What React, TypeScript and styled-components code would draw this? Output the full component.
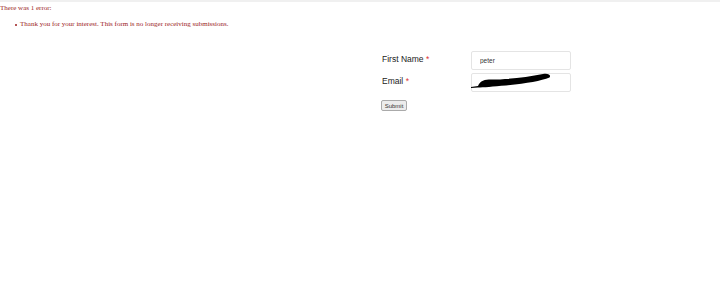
import React from 'react';
import styled, { createGlobalStyle } from 'styled-components';

const GlobalStyle = createGlobalStyle`
  html, body {
    margin: 0;
    padding: 0;
    background: #fff;
  }
  body {
    font-family: "Liberation Serif", serif;
  }
`;

const Page = styled.div`
  width: 720px;
  height: 295px;
  background: #fff;
  border-top: 2px solid #f0f0f0;
  box-sizing: border-box;
  overflow: hidden;
`;

const ErrorBox = styled.div`
  color: #9b1c1c;
  font-family: "Liberation Serif", serif;
  font-size: 7px;
  line-height: 9px;
`;

const ErrorTitle = styled.div`
  padding-top: 2px;
`;

const ErrorList = styled.ul`
  margin: 7px 0 0;
  padding-left: 20px;
  list-style: none;
`;

const ErrorItem = styled.li`
  position: relative;

  &::before {
    content: '';
    position: absolute;
    left: -5px;
    top: 4px;
    width: 2px;
    height: 2px;
    border-radius: 50%;
    background: #9b1c1c;
  }
`;

const FormArea = styled.form`
  display: flex;
  flex-direction: column;
  margin: 20px 0 0 381px;
  width: 190px;
  font-family: "Liberation Sans", Arial, sans-serif;
`;

const Row = styled.div`
  display: flex;
  align-items: center;
  height: 19px;
  margin-bottom: 3px;
`;

const Label = styled.label`
  width: 89px;
  font-size: 8.5px;
  color: #222;
  padding-left: 1px;
`;

const Req = styled.span`
  color: #d33;
`;

const InputWrap = styled.div`
  position: relative;
  width: 100px;
  height: 19px;
`;

const Input = styled.input`
  box-sizing: border-box;
  width: 100%;
  height: 100%;
  border: 1px solid #e4e4e4;
  border-radius: 2px;
  padding: 0 8px;
  font-family: "Liberation Sans", Arial, sans-serif;
  font-size: 6.5px;
  color: #333;
  background: #fff;
  outline: none;
`;

const Scribble = styled.svg`
  position: absolute;
  left: 0;
  top: 0;
  width: 82px;
  height: 20px;
  pointer-events: none;
`;

const SubmitButton = styled.button`
  margin-top: 7px;
  align-self: flex-start;
  width: 26px;
  height: 11px;
  padding: 0;
  font-family: "Liberation Sans", Arial, sans-serif;
  font-size: 6px;
  color: #333;
  background: #ececec;
  border: 1px solid #aaa;
  border-radius: 2px;
`;

export default function App() {
  return (
    <Page>
      <GlobalStyle />
      <ErrorBox>
        <ErrorTitle>There was 1 error:</ErrorTitle>
        <ErrorList>
          <ErrorItem>Thank you for your interest. This form is no longer receiving submissions.</ErrorItem>
        </ErrorList>
      </ErrorBox>
      <FormArea onSubmit={(e) => e.preventDefault()}>
        <Row>
          <Label>
            First Name <Req>*</Req>
          </Label>
          <InputWrap>
            <Input defaultValue="peter" />
          </InputWrap>
        </Row>
        <Row>
          <Label>
            Email <Req>*</Req>
          </Label>
          <InputWrap>
            <Input defaultValue="" />
            <Scribble viewBox="0 0 82 20">
              <path
                d="M0 16 L7 15 C9 9.5, 14 8.5, 20 8.5 C 35 8.5, 55 6.5, 72 3 C 77 2, 80.5 4, 78.5 6.5 C 70 10, 55 12.5, 35 14.5 C 22 15.5, 12 16.5, 7 16.5 L 0 17 Z"
                fill="#000"
              />
            </Scribble>
          </InputWrap>
        </Row>
        <SubmitButton type="submit">Submit</SubmitButton>
      </FormArea>
    </Page>
  );
}
